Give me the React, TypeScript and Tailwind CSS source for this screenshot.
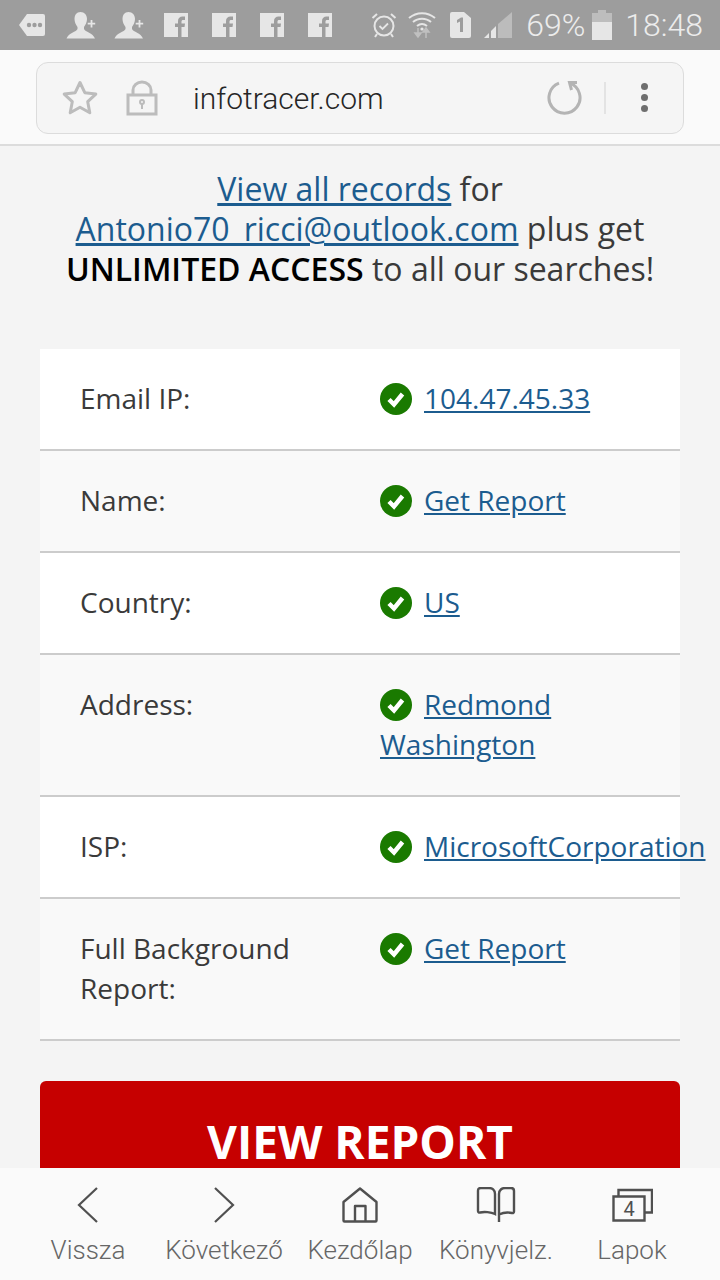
import React from "react";

const Tag = () => (
  <svg width="28" height="24" viewBox="0 0 28 24" className="shrink-0">
    <path d="M9 1h16a2 2 0 0 1 2 2v18a2 2 0 0 1-2 2H9L1 12z" fill="#e6e6e6" />
    <circle cx="11" cy="12" r="2.200" fill="#9d9d9d" />
    <circle cx="16.500" cy="12" r="2.200" fill="#9d9d9d" />
    <circle cx="22" cy="12" r="2.200" fill="#9d9d9d" />
  </svg>
);
const Person = ({ cls }: { cls: string }) => (
  <svg width="30" height="28" viewBox="0 0 30 28" className={cls}>
    <path d="M14.500 1c4 0 6.500 3 6.500 7 0 3-1.500 6-3 8v2c1 3 9 4 11 9.500H.5c2-5.500 10-6.500 11-9.500v-2c-1.500-2-3-5-3-8 0-4 2-7 6-7z" fill="#e6e6e6" />
    <path d="M25.500 9v7.500M21.700 12.700h7.500" stroke="#e6e6e6" strokeWidth="1.800" />
  </svg>
);
const Fb = ({ cls }: { cls: string }) => (
  <svg width="24" height="24" viewBox="0 0 24 24" className={cls}>
    <path d="M0 0h24v24H0z" fill="#e6e6e6" />
    <path d="M14 24v-10h-3v-3.500h3V8c0-3 2-4.500 4.500-4.500H21V7h-1.800c-1.200 0-1.700.6-1.700 1.600v1.900H21l-.5 3.500h-3v10z" fill="#9d9d9d" />
  </svg>
);
const Alarm = () => (
  <svg width="26" height="26" viewBox="0 0 26 26" fill="none" stroke="#e6e6e6" className="shrink-0">
    <circle cx="13" cy="14" r="9.500" strokeWidth="2" />
    <path d="M8.500 14l3 3 5.500-5.500" strokeWidth="1.800" />
    <path d="M1.500 6L6 2M24.500 6L20 2M6 22l-2 3M20 22l2 3" strokeWidth="2" />
  </svg>
);
const Wifi = () => (
  <svg width="28" height="28" viewBox="0 0 28 28" fill="none" className="shrink-0">
    <path d="M1 7c7.500-6.500 18.500-6.500 26 0M5 11c5-4.500 13-4.500 18 0M9 15c3-2.500 7-2.500 10 0" stroke="#e6e6e6" strokeWidth="2" />
    <circle cx="14" cy="18" r="1.600" fill="#e6e6e6" />
    <path d="M10 17v7M7 22l3 4 3-4z" stroke="#c0c0c0" fill="#c0c0c0" strokeWidth="1.500" />
    <path d="M18 27v-7M15 21l3-4 3 4z" stroke="#c0c0c0" fill="#c0c0c0" strokeWidth="1.500" />
  </svg>
);
const Sim = () => (
  <svg width="21" height="26" viewBox="0 0 21 26" className="shrink-0">
    <path d="M2 0h12l7 6v18a2 2 0 0 1-2 2H2a2 2 0 0 1-2-2V2a2 2 0 0 1 2-2z" fill="#e6e6e6" />
    <path d="M7 8l4-2.500h2V20h-3V9.500L7 11z" fill="#9d9d9d" />
  </svg>
);
const Signal = () => (
  <svg width="28" height="26" viewBox="0 0 28 26" className="shrink-0">
    <path d="M0 26l5-5v5z" fill="#e6e6e6" />
    <path d="M7 26v-7l5-5v12z" fill="#e6e6e6" />
    <path d="M14 26V12l14-12v26z" fill="#bcbcbc" />
  </svg>
);
const Battery = () => (
  <svg width="20" height="30" viewBox="0 0 20 30" className="shrink-0">
    <path d="M6 0h8v3h6v27H0V3h6z" fill="#bdbdbd" />
    <path d="M0 12h20v18H0z" fill="#e6e6e6" />
  </svg>
);

const Check = () => (
  <svg width="32" height="32" viewBox="0 0 32 32" className="mr-3 inline-block align-[-6px]">
    <circle cx="16" cy="16" r="16" fill="#1a7a00" />
    <path d="M9 16.500l5 5 8.500-10.500" fill="none" stroke="#fff" strokeWidth="4.500" />
  </svg>
);

const rows: { label: string; value: string; nowrap?: boolean }[] = [
  { label: "Email IP:", value: "104.47.45.33" },
  { label: "Name:", value: "Get Report" },
  { label: "Country:", value: "US" },
  { label: "Address:", value: "Redmond Washington" },
  { label: "ISP:", value: "MicrosoftCorporation", nowrap: true },
  { label: "Full Background Report:", value: "Get Report" },
];

const navIcons = [
  <svg key="a" width="40" height="36" viewBox="0 0 40 36" fill="none" stroke="#505050" strokeWidth="2.200">
    <path d="M29 1L11 18l18 17" />
  </svg>,
  <svg key="b" width="40" height="36" viewBox="0 0 40 36" fill="none" stroke="#505050" strokeWidth="2.200">
    <path d="M11 1l18 17-18 17" />
  </svg>,
  <svg key="c" width="40" height="36" viewBox="0 0 40 36" fill="none" stroke="#505050" strokeWidth="2.400" strokeLinejoin="round">
    <path d="M20 1.500L3.500 15v18.500a1 1 0 0 0 1 1h31a1 1 0 0 0 1-1V15z" />
    <path d="M15 34.500V19h10.500v15.500" />
  </svg>,
  <svg key="d" width="40" height="36" viewBox="0 0 40 36" fill="none" stroke="#505050" strokeWidth="2.400">
    <path d="M2 4c0-2 1-3 3-3h8c3 0 6 2 6 6v20c-4-2-11-2.500-15-1.500-1.200.3-2-.3-2-1.500z" />
    <path d="M23 35V7c0-4 3-6 6-6h6c2 0 3 1 3 3v20.500c0 1.200-.8 1.800-2 1.500-4-1-9-.5-13 1.500" />
  </svg>,
  <svg key="e" width="42" height="36" viewBox="0 0 42 36" fill="none" stroke="#505050" strokeWidth="2.400">
    <path d="M7.500 9V3h33.500v22.500h-7" />
    <path d="M2.500 9.500h31v24h-31z" />
    <text x="18" y="28.500" textAnchor="middle" fontFamily="Roboto, sans-serif" fontSize="20" fill="#505050" stroke="none">4</text>
  </svg>,
];
const navLabels = ["Vissza", "Következő", "Kezdőlap", "Könyvjelz.", "Lapok"];

export default function App() {
  return (
    <div className="flex h-[1280px] w-[720px] flex-col overflow-hidden bg-[#f4f4f4] font-['Open_Sans',sans-serif]">
      <div className="flex h-[50px] shrink-0 items-center justify-between bg-[#9d9d9d] pl-[18px] pr-[17px]">
        <div className="flex items-center">
          <Tag />
          <Person cls="ml-5 shrink-0" />
          <Person cls="ml-[18px] shrink-0" />
          <Fb cls="ml-5 shrink-0" />
          <Fb cls="ml-6 shrink-0" />
          <Fb cls="ml-6 shrink-0" />
          <Fb cls="ml-6 shrink-0" />
        </div>
        <div className="flex items-center">
          <Alarm />
          <div className="ml-[11px]"><Wifi /></div>
          <div className="ml-[14px]"><Sim /></div>
          <div className="ml-[13px]"><Signal /></div>
          <span className="ml-[14px] font-['Roboto',sans-serif] text-[32px] font-light leading-none text-[#ececec]">69%</span>
          <div className="ml-[7px]"><Battery /></div>
          <span className="ml-[13px] font-['Roboto',sans-serif] text-[32px] font-light leading-none text-[#ececec]">18:48</span>
        </div>
      </div>

      <div className="flex h-[96px] shrink-0 items-center border-b-2 border-[#dcdcdc] bg-[#fafafa] px-9 pt-[1px]">
        <div className="flex h-[72px] w-full items-center rounded-[12px] border-[1.5px] border-[#dcdcdc] bg-[#f5f5f5] pl-[25px]">
          <svg width="36" height="36" viewBox="0 0 36 36" fill="none" stroke="#bcbcbc" strokeWidth="3" strokeLinejoin="round" className="shrink-0">
            <path d="M18 2.500l4.800 10.200 11 1.400-8.100 7.600 2.100 11L18 27.200 8.200 32.700l2.100-11-8.100-7.600 11-1.400z" />
          </svg>
          <svg width="32" height="36" viewBox="0 0 32 36" fill="none" stroke="#bcbcbc" strokeWidth="3" className="ml-[28px] shrink-0">
            <path d="M2 15h28v19H2z" />
            <path d="M7 15V10a9 8 0 0 1 18 0v5" />
            <circle cx="16" cy="22" r="2" strokeWidth="2" />
            <path d="M16 24v5" strokeWidth="2" />
          </svg>
          <span className="ml-[35px] pt-[2px] font-['Roboto',sans-serif] text-[30px] font-light text-[#262626]">infotracer.com</span>
          <svg width="36" height="36" viewBox="0 0 36 36" fill="none" stroke="#b4b4b4" strokeWidth="3" className="ml-auto shrink-0">
            <path d="M24 3.200A15.500 15.500 0 1 1 13 3.200" />
            <path d="M31 2.500H23.500L25.500 10" />
          </svg>
          <div className="ml-[22px] h-8 w-[2px] shrink-0 bg-[#e3e3e3]" />
          <div className="ml-[35px] mr-[35px] flex shrink-0 flex-col gap-1">
            <div className="h-[7px] w-[7px] rounded-full bg-[#6e6e6e]" />
            <div className="h-[7px] w-[7px] rounded-full bg-[#6e6e6e]" />
            <div className="h-[7px] w-[7px] rounded-full bg-[#6e6e6e]" />
          </div>
        </div>
      </div>

      <div className="min-h-0 flex-1 overflow-hidden px-10 pt-[23px]">
        <p className="-mx-5 text-center text-[32px] leading-[40px] text-[#3a3a3a]">
          <a className="text-[#1c5c8f] underline">View all records</a> for
          <br />
          <a className="text-[#1c5c8f] underline">Antonio70_ricci@outlook.com</a> plus get
          <br />
          <strong className="font-semibold text-black">UNLIMITED ACCESS</strong> to all our searches!
        </p>
        <div className="mt-[60px]">
          {rows.map((r, i) => (
            <div
              key={r.label + i}
              className={`grid grid-cols-[340px_300px] border-b-2 border-[#ccc] pb-[31px] pt-[29px] text-[28px] leading-[40px] text-[#3a3a3a] ${i % 2 === 0 ? "bg-white" : "bg-[#f9f9f9]"}`}
            >
              <div className="pl-10 pr-10">{r.label}</div>
              <div className={r.nowrap ? "whitespace-nowrap" : ""}>
                <Check />
                <a className="text-[#1c5c8f] underline">{r.value}</a>
              </div>
            </div>
          ))}
        </div>
        <div className="mt-10 flex h-[87px] items-start justify-center rounded-t-[6px] bg-[#c60000] pt-[28px] text-[46px] font-bold leading-[64px] text-white">
          <span>VIEW REPORT</span>
        </div>
      </div>

      <div className="grid h-[112px] shrink-0 grid-cols-5 bg-[#fafafa] px-5 font-['Roboto',sans-serif]">
        {navLabels.map((l, i) => (
          <div key={l} className="flex flex-col items-center pt-[19px]">
            <div className="flex h-[36px] items-center justify-center">{navIcons[i]}</div>
            <span className="mt-3 whitespace-nowrap text-[26px] font-light leading-[30px] text-[#666]">{l}</span>
          </div>
        ))}
      </div>
    </div>
  );
}
